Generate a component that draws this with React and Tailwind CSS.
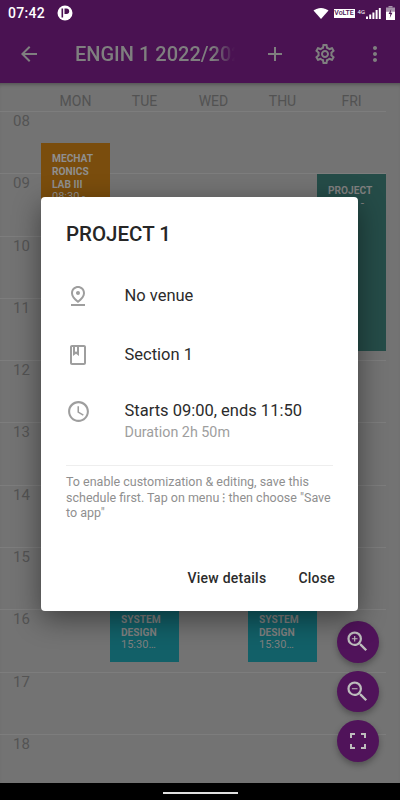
import {
  MdArrowBack,
  MdAdd,
  MdOutlineSettings,
  MdMoreVert,
  MdOutlinePinDrop,
  MdOutlineBook,
  MdOutlineAccessTime,
  MdZoomIn,
  MdZoomOut,
} from "react-icons/md";

const days = ["MON", "TUE", "WED", "THU", "FRI"];
const hours = ["08", "09", "10", "11", "12", "13", "14", "15", "16", "17", "18"];

function StatusBar() {
  return (
    <div className="flex h-[26px] items-center pl-2 pr-[5px] text-white">
      <span className="text-[14px] font-medium tracking-[0.3px]">07:42</span>
      <svg width="16" height="16" viewBox="0 0 16 16" className="ml-[12px]">
        <circle cx="8" cy="8" r="7.5" fill="white" />
        <rect x="4.5" y="3.5" width="1.6" height="9" fill="#4a1252" />
        <path d="M7.5 3.5h2a2.7 2.7 0 0 1 0 5.4h-2z" fill="#4a1252" />
      </svg>
      <div className="ml-auto flex items-center">
        <svg width="16" height="14" viewBox="0 0 16 14">
          <path d="M0.5 4.5C4.5 1 11.5 1 15.5 4.5L8 13z" fill="white" />
          <path d="M2 3C5.5 0.6 10.5 0.6 14 3" fill="none" stroke="#4a1252" strokeWidth="0.7" />
        </svg>
        <span className="ml-[5px] flex h-[9px] w-[21px] items-center justify-center bg-white text-[7px] font-medium leading-none text-[#4a1252]">
          VoLTE
        </span>
        <span className="mb-[2px] ml-[3px] text-[6px] leading-none text-white">4G</span>
        <svg width="15" height="11" viewBox="0 0 15 11" className="ml-[1px]">
          <rect x="0" y="8.5" width="2" height="2.5" fill="white" />
          <rect x="3.2" y="6.5" width="2" height="4.5" fill="white" />
          <rect x="6.4" y="4.5" width="2" height="6.5" fill="white" />
          <rect x="9.6" y="2" width="2" height="9" fill="white" />
          <rect x="12.8" y="0" width="2" height="11" fill="white" />
        </svg>
        <svg width="9" height="14" viewBox="0 0 9 14" className="ml-[5px]">
          <rect x="2.5" y="0" width="4" height="1.5" fill="#a794ab" />
          <rect x="0" y="1.5" width="9" height="4" fill="#a794ab" />
          <rect x="0" y="5.5" width="9" height="8.5" fill="white" />
          <path d="M5.2 3 2.6 8h1.8l-.6 4 2.6-5.2H4.6z" fill="#4a1252" />
        </svg>
      </div>
    </div>
  );
}

function Toolbar() {
  return (
    <div className="flex h-[57px] items-center pb-[1px] text-[#7f7f7f]">
      <MdArrowBack className="ml-[17px] text-[24px]" />
      <div className="ml-[34px] w-[160px] overflow-hidden whitespace-nowrap text-[20px] font-medium [mask-image:linear-gradient(to_right,black_86%,transparent)]">
        ENGIN 1 2022/2023
      </div>
      <MdAdd className="ml-[28px] text-[24px]" />
      <MdOutlineSettings className="ml-[26px] text-[24px]" />
      <MdMoreVert className="ml-[26px] text-[24px]" />
    </div>
  );
}

function Calendar() {
  return (
    <div className="relative flex-1 overflow-hidden bg-[#737373] shadow-[inset_0_4px_4px_-3px_rgba(0,0,0,0.35)]">
      <div className="flex h-[28px] items-end pb-[1px] pl-[41px]">
        {days.map((d) => (
          <div key={d} className="w-[69px] text-center text-[14px] leading-[18px] text-[#525252]">
            {d}
          </div>
        ))}
      </div>
      {hours.map((h) => (
        <div key={h} className="h-[62.3px] w-[386px] border-t border-[#7d7d7d] pt-[1px] text-[15px] leading-[16px] text-[#545454]">
          <span className="ml-[13px]">{h}</span>
        </div>
      ))}

      {/* events sit on top of the hour lines */}
      <div className="absolute left-[41px] top-[60px] h-[120px] w-[69px] bg-[#7a4d0d] px-[11px] pt-[9px] text-[#8f8f8f]">
        <div className="text-[10.2px] font-bold leading-[13px]">
          MECHAT
          <br />
          RONICS
          <br />
          LAB III
        </div>
        <div className="text-[11px] leading-[12px]">08:30 -</div>
      </div>
      <div className="absolute left-[317px] top-[91px] h-[177px] w-[69px] bg-[#254c48] pl-[11px] pt-[10px] text-[#7f7f7f]">
        <div className="text-[10.2px] font-bold leading-[13px]">PROJECT</div>
        <div className="text-[12px] leading-[13px]">09:00 -</div>
      </div>
      <SystemDesign left="left-[110px]" />
      <SystemDesign left="left-[248px]" />

      <div className="absolute left-[337px] top-[538px] flex flex-col gap-[8px]">
        <Fab>
          <MdZoomIn className="text-[27px]" />
        </Fab>
        <Fab>
          <MdZoomOut className="text-[27px]" />
        </Fab>
        <Fab>
          <svg width="16" height="16" viewBox="0 0 16 16" fill="none" stroke="currentColor" strokeWidth="2">
            <path d="M1 5V1h4M11 1h4v4M15 11v4h-4M5 15H1v-4" />
          </svg>
        </Fab>
      </div>
    </div>
  );
}

function SystemDesign({ left }) {
  return (
    <div className={`absolute ${left} top-[520px] h-[59px] w-[69px] bg-[#126068] pl-[11px] pt-[11px] leading-[12.5px] text-[#808080]`}>
      <div className="text-[10.2px] font-bold">SYSTEM</div>
      <div className="text-[10.2px] font-bold">DESIGN</div>
      <div className="text-[11px]">15:30…</div>
    </div>
  );
}

function Fab({ children }) {
  return (
    <div className="flex h-[41.5px] w-[41.5px] items-center justify-center rounded-full bg-[#50135a] text-[#bdbdbd] shadow-[0_3px_6px_rgba(0,0,0,0.3)]">
      {children}
    </div>
  );
}

function Row({ icon, children }) {
  return (
    <div className="flex items-center">
      <div className="flex w-[58.5px] text-[#9e9e9e]">{icon}</div>
      <div className="text-[16.5px] leading-[20px] text-[#2b2b2b]">{children}</div>
    </div>
  );
}

function Dialog() {
  return (
    <div className="absolute left-[41px] top-[197px] flex h-[414px] w-[317px] flex-col rounded-[4px] bg-white pl-[25px] pr-[25px] shadow-[0_8px_28px_rgba(0,0,0,0.45)]">
      <div className="mt-[25px] text-[20.5px] font-medium leading-[24px] text-[#262626]">PROJECT 1</div>
      <div className="mt-[38px]">
        <Row icon={<MdOutlinePinDrop className="text-[24px]" />}>No venue</Row>
      </div>
      <div className="mt-[35px]">
        <Row icon={<MdOutlineBook className="text-[24px]" />}>Section 1</Row>
      </div>
      <div className="mt-[34px] flex">
        <div className="-mt-[2px] w-[58.5px] text-[#9e9e9e]">
          <MdOutlineAccessTime className="text-[25px]" />
        </div>
        <div>
          <div className="text-[16.5px] leading-[20px] text-[#2b2b2b]">Starts 09:00, ends 11:50</div>
          <div className="mt-[2px] text-[14.3px] leading-[18px] text-[#9e9e9e]">Duration 2h 50m</div>
        </div>
      </div>
      <div className="mt-[24px] border-t border-[#eeeeee] pt-[8px] text-[12.5px] leading-[15.5px] text-[#8f8f8f]">
        To enable customization &amp; editing, save this schedule first. Tap on menu ⁝ then choose "Save to app"
      </div>
      <div className="-mr-[2px] mb-[24px] mt-auto flex justify-end gap-[32px] text-[14px] font-medium leading-[18px] tracking-[0.25px] text-[#2b2b2b]">
        <span>View details</span>
        <span>Close</span>
      </div>
    </div>
  );
}

export default function App() {
  return (
    <div className="relative flex h-[800px] w-[400px] flex-col overflow-hidden font-['Roboto',sans-serif]">
      <div className="z-10 bg-[#4a1252]">
        <StatusBar />
        <Toolbar />
      </div>
      <Calendar />
      <div className="relative flex h-[17px] justify-center bg-black">
        <div className="mt-[9px] h-[2px] w-[75px] bg-[#e0e0e0]" />
      </div>
      <Dialog />
    </div>
  );
}
